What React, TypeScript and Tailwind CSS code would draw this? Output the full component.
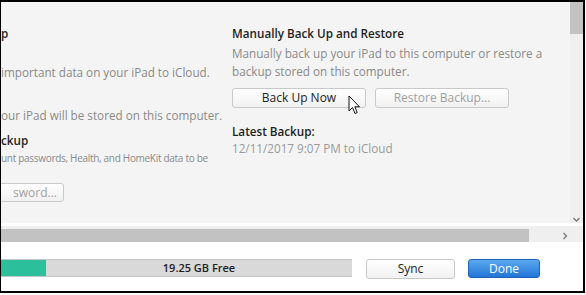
import React from "react";

function Btn({ children, disabled, className = "" }: { children: React.ReactNode; disabled?: boolean; className?: string }) {
  return (
    <div
      className={`flex h-[20px] items-center justify-center rounded-[3px] border border-[#c9c9c9] bg-gradient-to-b from-white to-[#f1f1f1] text-[12px] ${
        disabled ? "text-[#a0a0a0]" : "text-[#222]"
      } ${className}`}
    >
      {children}
    </div>
  );
}

function Cursor() {
  return (
    <svg className="absolute left-[347px] top-[93px]" width="13" height="20" viewBox="0 0 13 20">
      <path d="M1 1 L1 16 L4.5 12.5 L7 18.5 L9.2 17.6 L6.8 11.8 L11.5 11.8 Z" fill="#fff" stroke="#111" strokeWidth="1" strokeLinejoin="round" />
    </svg>
  );
}

export default function App() {
  return (
    <div className="h-[295px] w-[586px] bg-white" style={{ fontFamily: '"Open Sans", "Noto Sans", sans-serif' }}>
      <div className="flex h-[293px] w-[585px] flex-col border-t-2 border-r-2 border-b-2 border-l border-black">
        {/* scrolled content */}
        <div className="flex h-[221px] bg-[#f4f4f4]">
          <div className="relative flex flex-1 overflow-hidden">
            {/* left column, scrolled out of view */}
            <div className="flex w-[231px] shrink-0 flex-col pt-[22px] text-[11.7px] leading-[18px]">
              <div className="font-semibold text-[#1e1e1e]">p</div>
              <div className="mt-[21px] whitespace-nowrap text-[#8a8a8a]">important data on your iPad to iCloud.</div>
              <div className="mt-[25px] whitespace-nowrap text-[#8a8a8a]">our iPad will be stored on this computer.</div>
              <div className="mt-[7px] font-semibold text-[#1e1e1e]">ckup</div>
              <div className="mt-[1px] whitespace-nowrap text-[10px] leading-[16px] tracking-[-0.3px] text-[#8a8a8a]">
                unt passwords, Health, and HomeKit data to be
              </div>
              <div className="-ml-[20px] mt-[17px] flex h-[19px] w-[83px] items-center justify-end rounded-[3px] border border-[#c9c9c9] bg-gradient-to-b from-white to-[#f1f1f1] pr-[6px] text-[12px] text-[#a0a0a0]">
                sword...
              </div>
            </div>
            {/* right column */}
            <div className="flex flex-col pt-[22px] text-[11.7px] leading-[18px]">
              <div className="font-semibold text-[#1e1e1e]">Manually Back Up and Restore</div>
              <div className="mt-[2px] text-[#8a8a8a]">Manually back up your iPad to this computer or restore a</div>
              <div className="text-[#8a8a8a]">backup stored on this computer.</div>
              <div className="mt-[8px] flex gap-[9px]">
                <Btn className="w-[134px]">Back Up Now</Btn>
                <Btn disabled className="w-[134px]">
                  Restore Backup...
                </Btn>
              </div>
              <div className="mt-[14px] font-semibold text-[#1e1e1e]">Latest Backup:</div>
              <div className="leading-[17px] text-[#9a9a9a]">12/11/2017 9:07 PM to iCloud</div>
            </div>
            <Cursor />
          </div>
          {/* vertical scrollbar */}
          <div className="flex w-[13px] flex-col justify-between bg-[#efefef]">
            <div className="h-[32px] bg-[#c2c2c2]" />
            <svg width="13" height="6" viewBox="0 0 13 6">
              <path d="M3.5 1 L6.5 4 L9.5 1" fill="none" stroke="#777" strokeWidth="1.3" />
            </svg>
          </div>
        </div>
        <div className="h-[3px] bg-white" />
        {/* horizontal scrollbar */}
        <div className="flex h-[16px] items-stretch bg-[#efefef]">
          <div className="mt-[3px] w-[528px] bg-[#c2c2c2]" />
          <div className="flex flex-1 items-center justify-end pr-[15px] pt-[3px]">
            <svg width="6" height="8" viewBox="0 0 6 8">
              <path d="M1.5 1 L4.5 4 L1.5 7" fill="none" stroke="#777" strokeWidth="1.3" />
            </svg>
          </div>
        </div>
        {/* footer */}
        <div className="flex flex-1 items-start bg-white pt-[17px]">
          <div className="flex h-[18px] w-[351px] border-y border-[#c6c6c6] bg-[#d9d9d9]">
            <div className="w-[45px] bg-[#2bbf9b]" />
            <div className="flex flex-1 items-center justify-center text-[11px] font-semibold text-[#222]">19.25 GB Free</div>
          </div>
          <Btn className="ml-[14px] h-[19px] w-[89px]">Sync</Btn>
          <div className="ml-[13px] flex h-[19px] w-[72px] items-center justify-center rounded-[3px] border border-[#1f62b8] bg-gradient-to-b from-[#5aa8ee] to-[#2075d6] text-[12px] text-white">
            Done
          </div>
        </div>
      </div>
    </div>
  );
}
